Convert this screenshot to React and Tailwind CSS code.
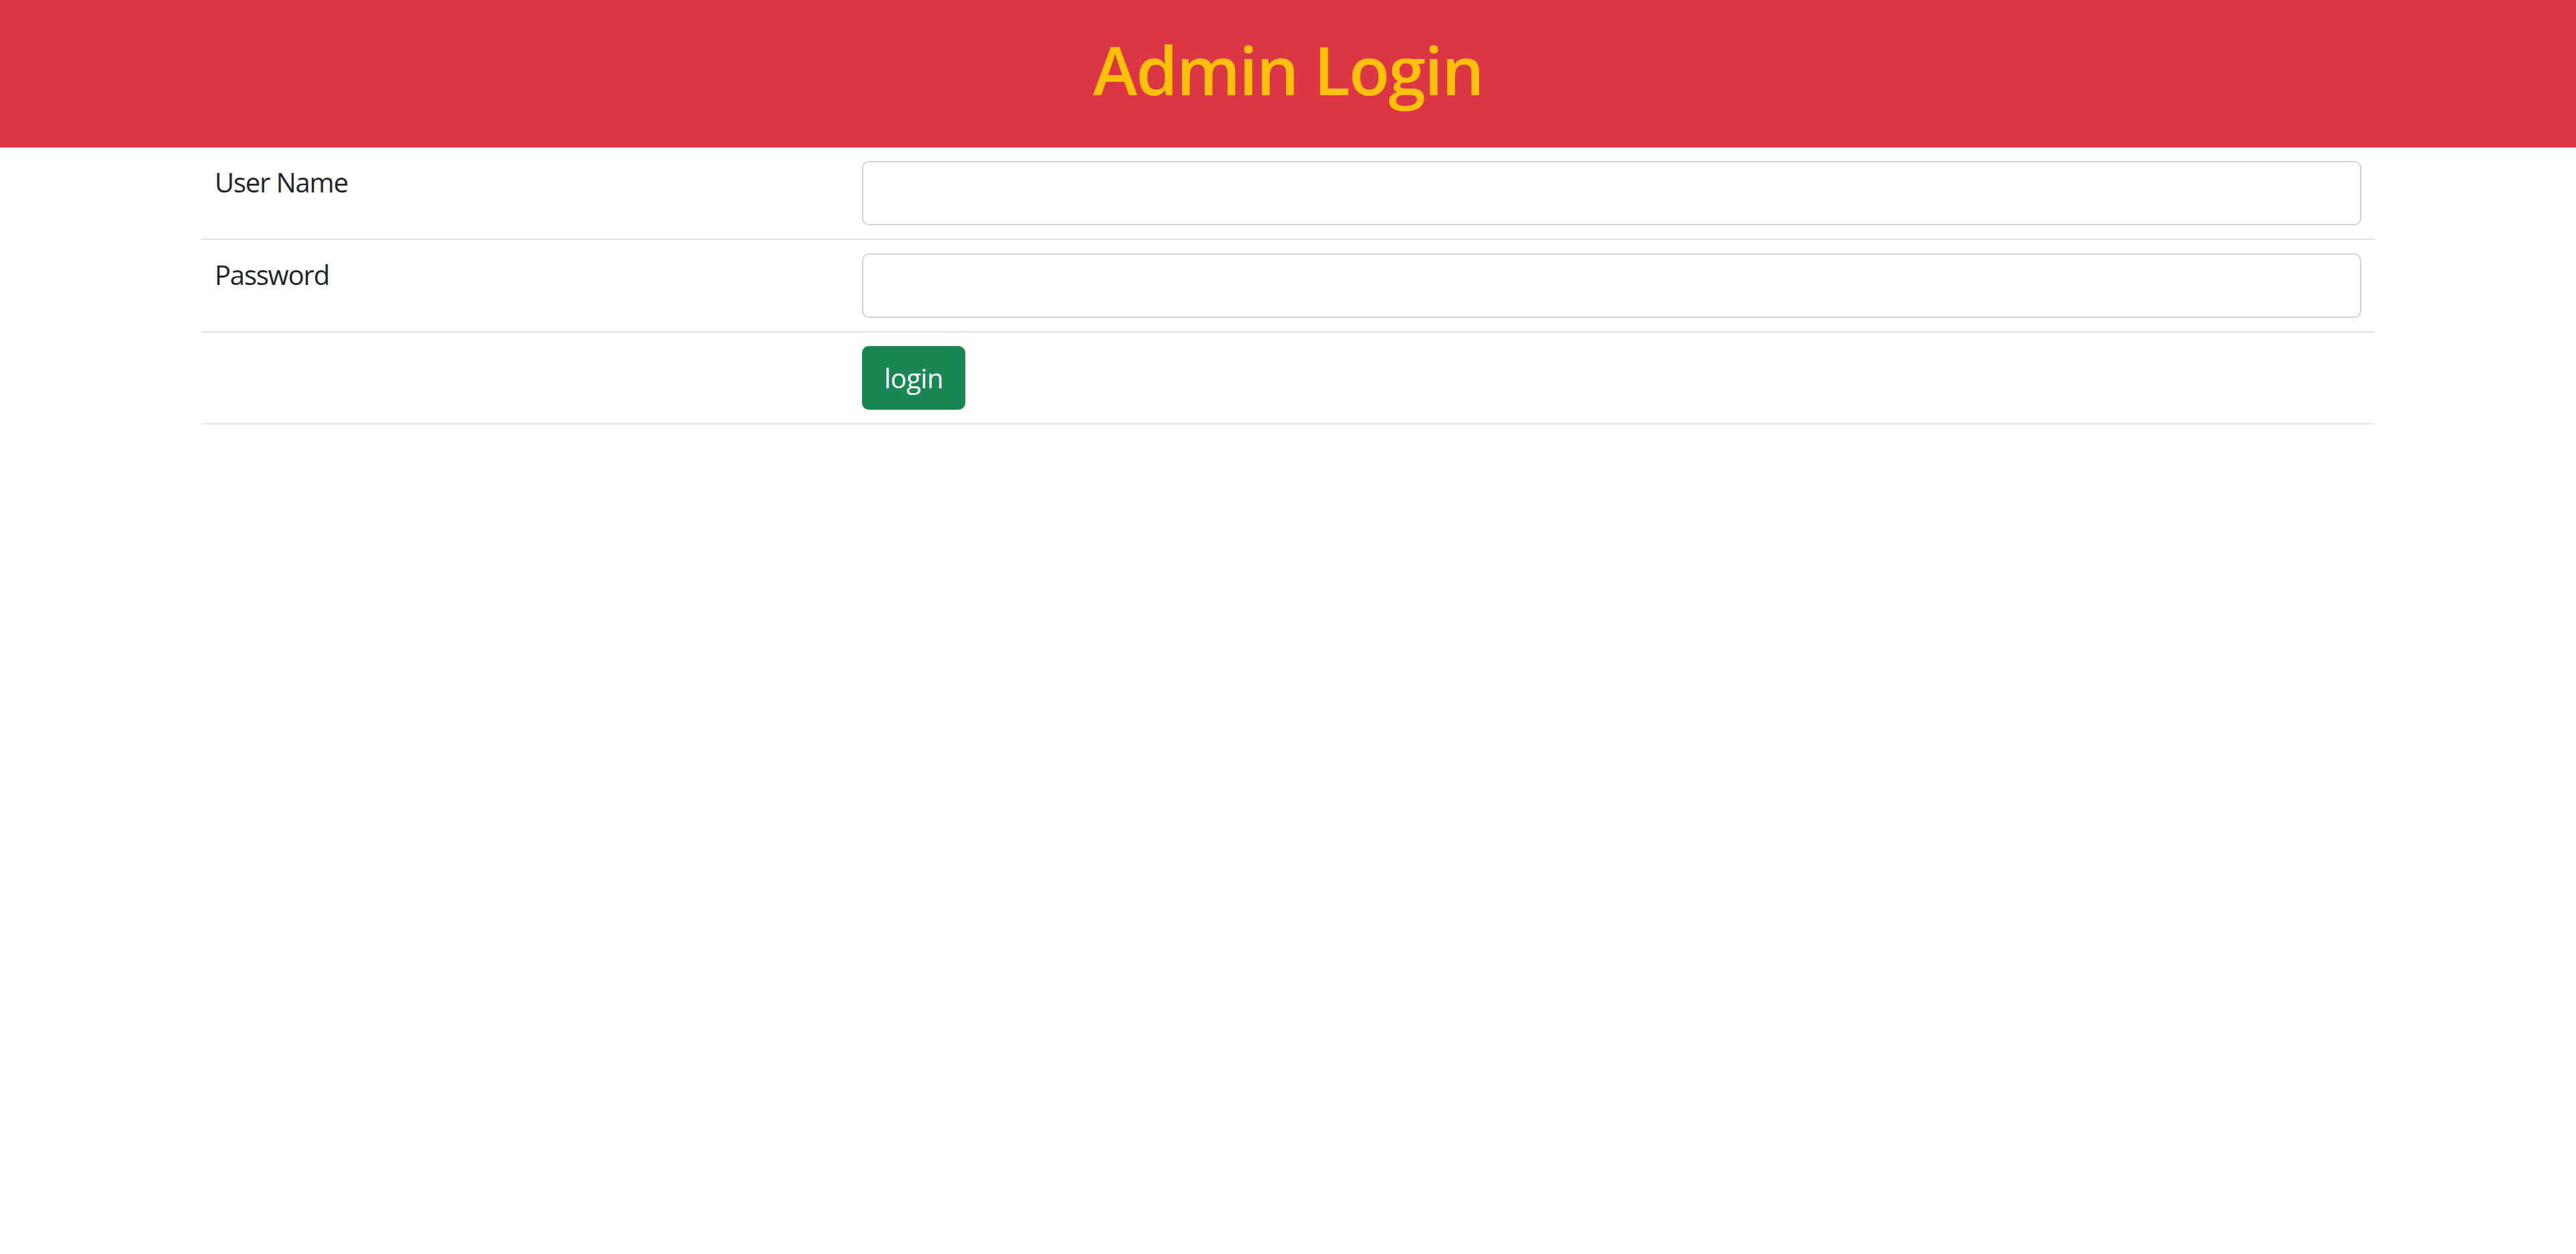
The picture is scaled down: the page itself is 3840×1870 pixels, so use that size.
import React, { useState } from 'react';

const cn = (...classes) => classes.filter(Boolean).join(' ');

// Admin login — header bar plus a simple two-column form table
const Row = ({ label, children }) => (
    <div className="flex border-b-2 border-[#dee2e6]">
        <div className="w-[965px] shrink-0 px-[20px] pt-[22px] pb-[18px] text-[40px] leading-[60px] tracking-[-1.2px] text-[#212529]">
            {label}
        </div>
        <div className="flex-1 px-[20px] py-[20px]">{children}</div>
    </div>
);

const App = () => {
    const [user, setUser] = useState('');
    const [pass, setPass] = useState('');

    const inputCls = "block w-full h-[96px] px-[30px] text-[40px] text-[#212529] bg-white border-2 border-[#ced4da] rounded-[10px] outline-none";

    return (
        <div className="min-h-screen bg-white font-['Open_Sans',sans-serif]">
            {/* Header */}
            <div className="h-[220px] bg-[#dc3545] pt-[43px] text-center">
                <h1 className="text-[100px] leading-[120px] font-semibold text-[#ffc107] tracking-[-2px]">
                    Admin Login
                </h1>
            </div>

            {/* Form */}
            <div className="w-[3300px] mx-auto px-[30px]">
                <Row label="User Name">
                    <input className={inputCls} value={user} onChange={(e) => setUser(e.target.value)} />
                </Row>
                <Row label="Password">
                    <input type="password" className={inputCls} value={pass} onChange={(e) => setPass(e.target.value)} />
                </Row>
                <Row label="">
                    <button className={cn("w-[154px] h-[95px] rounded-[10px] bg-[#198754] text-white text-[40px] leading-[60px] tracking-[-0.5px]")}>
                        login
                    </button>
                </Row>
            </div>
        </div>
    );
};

export default App;
